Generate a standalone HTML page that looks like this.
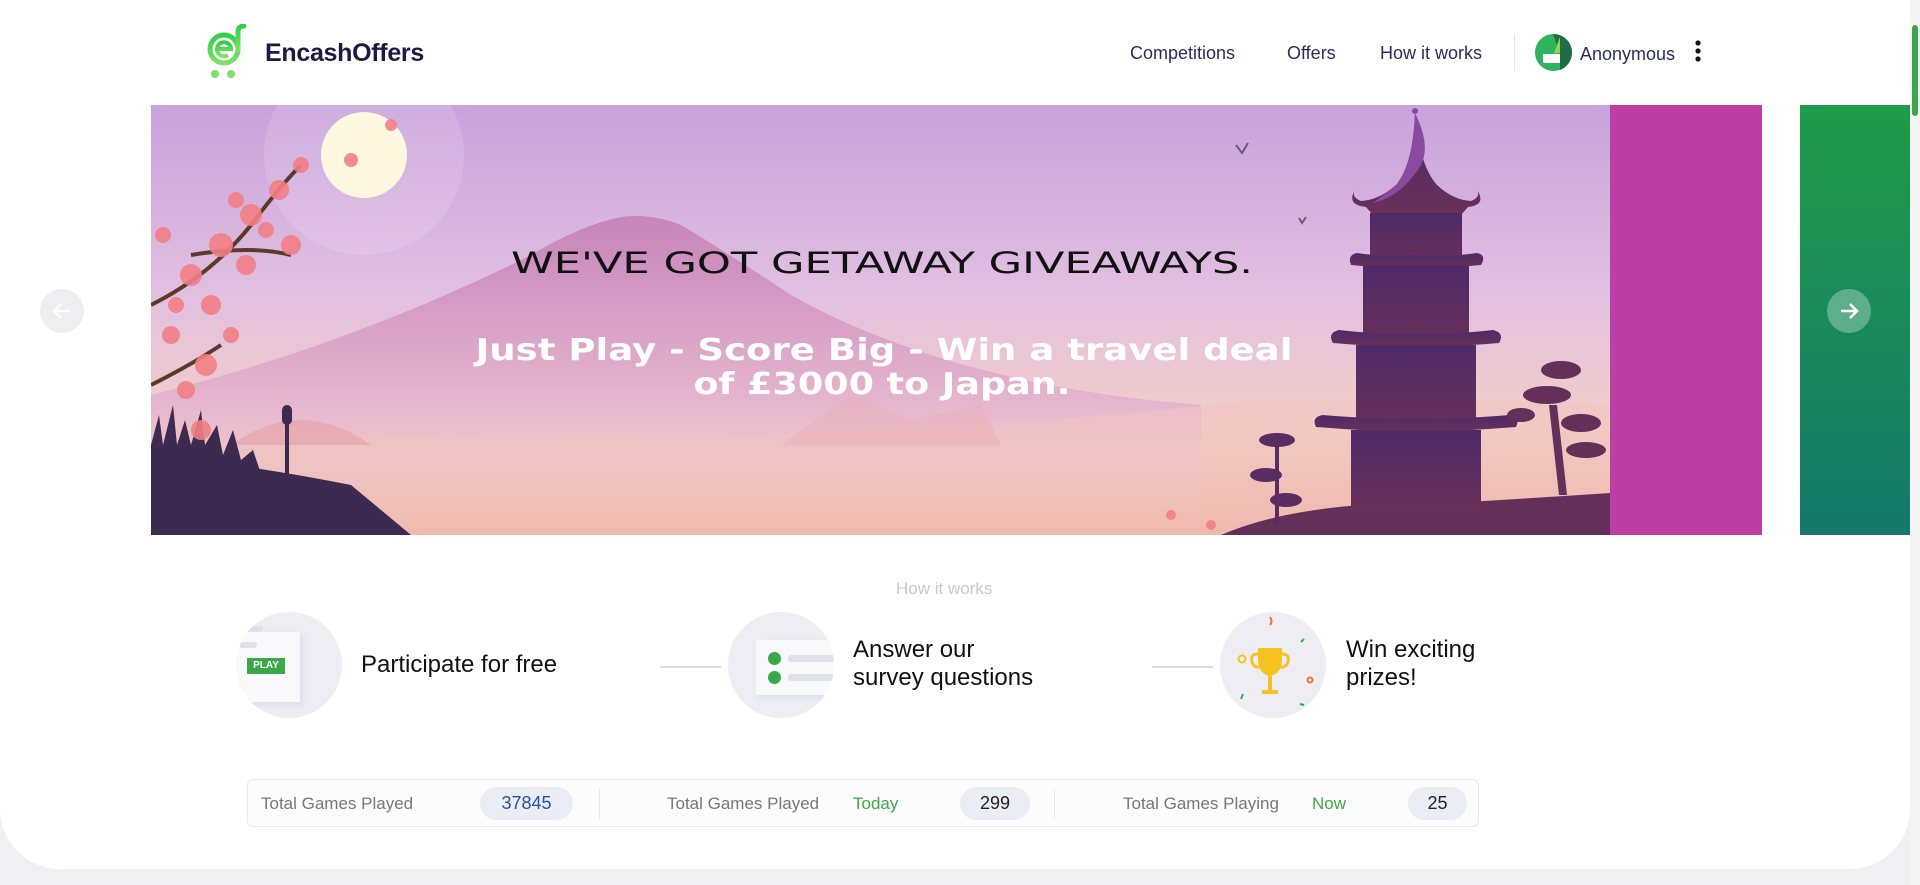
<!DOCTYPE html>
<html><head><meta charset="utf-8"><style>
*{margin:0;padding:0;box-sizing:border-box}
html,body{width:1920px;height:885px;overflow:hidden;background:#f0f0f4;font-family:"Liberation Sans",sans-serif}
.card{position:absolute;left:0;top:0;width:1910px;height:869px;background:#fff;border-radius:0 0 60px 60px}
.sb{position:absolute;left:1910px;top:0;width:10px;height:885px;background:#f4f4f4}
.thumb{position:absolute;left:1912px;top:25px;width:6px;height:91px;background:#3aa84a;border-radius:3px}
.nav a{position:absolute;top:43px;font-size:18px;color:#2a2d5a;text-decoration:none}
.t{position:absolute;white-space:nowrap}
.circ{position:absolute;width:106px;height:106px;border-radius:50%;background:#ededf3;overflow:hidden}
.line{position:absolute;height:2px;background:#d8dae6;width:61px;top:666px}
.stats{position:absolute;left:247px;top:779px;width:1232px;height:48px;border:1px solid #e8e8ee;border-radius:6px;background:#fcfcfd}
.st{position:absolute;top:14px;font-size:17px;color:#777}
.pill{position:absolute;top:7px;height:33px;border-radius:17px;background:#ebedf4;font-size:18px;text-align:center;line-height:33px;color:#222}
.dv{position:absolute;top:9px;width:1px;height:30px;background:#e6e6ec}
</style></head><body>
<div class="card"></div>
<div class="sb"></div><div class="thumb"></div>

<svg style="position:absolute;left:206px;top:24px" width="48" height="56" viewBox="0 0 48 56">
<defs><linearGradient id="lg" x1="0" y1="0" x2="0" y2="1"><stop offset="0" stop-color="#2fcf4a"/><stop offset="1" stop-color="#7fe06a"/></linearGradient></defs>
<circle cx="18" cy="25" r="14" fill="none" stroke="url(#lg)" stroke-width="5"/>
<path d="M32 26 V8 Q32 2 38 2" fill="none" stroke="url(#lg)" stroke-width="5" stroke-linecap="round"/>
<path d="M11 25 H25 A7 7 0 1 0 22 31" fill="none" stroke="url(#lg)" stroke-width="4"/>
<circle cx="9" cy="50" r="4" fill="#7fe06a"/><circle cx="25" cy="50" r="4" fill="#7fe06a"/>
</svg>
<div class="t" style="left:265px;top:39px;font-size:25px;font-weight:bold;color:#1a1a45;letter-spacing:-0.3px">EncashOffers</div>

<div class="nav"><a style="left:1130px">Competitions</a><a style="left:1287px">Offers</a><a style="left:1380px">How it works</a></div>
<div style="position:absolute;left:1514px;top:34px;width:1px;height:37px;background:#e4e6ee"></div>
<svg style="position:absolute;left:1535px;top:34px" width="37" height="37" viewBox="0 0 37 37">
<circle cx="18.5" cy="18.5" r="18.5" fill="#2eb35f"/><path d="M18 0 A18.5 18.5 0 0 1 37 18.5 A18.5 18.5 0 0 1 25 36 V20 Z" fill="#1f6e48"/><path d="M25 3 V19 H19 Z" fill="#9ad14b"/><rect x="8" y="20" width="17" height="9" fill="#fff"/></svg>
<div class="t" style="left:1580px;top:44px;font-size:18px;color:#2a2d5a">Anonymous</div>
<svg style="position:absolute;left:1694px;top:40px" width="8" height="22"><circle cx="4" cy="3" r="2.6" fill="#111"/><circle cx="4" cy="11" r="2.6" fill="#111"/><circle cx="4" cy="19" r="2.6" fill="#111"/></svg>

<svg style="position:absolute;left:151px;top:105px" width="1611" height="430" viewBox="0 0 1611 430">
<defs>
<linearGradient id="sky" x1="0" y1="0" x2="0" y2="1"><stop offset="0" stop-color="#c8a2dc"/><stop offset=".45" stop-color="#e2c0e0"/><stop offset=".75" stop-color="#f3cfc8"/><stop offset="1" stop-color="#eeae9e"/></linearGradient>
<linearGradient id="mt" x1="0" y1="0" x2="0" y2="1"><stop offset="0" stop-color="#c47cb2"/><stop offset=".6" stop-color="#e4b2cf"/><stop offset="1" stop-color="#f3cfc8" stop-opacity="0"/></linearGradient>
<linearGradient id="pg" x1="0" y1="0" x2="0" y2="1"><stop offset="0" stop-color="#4e2a6a"/><stop offset="1" stop-color="#6a3058"/></linearGradient>
</defs>
<rect width="1459" height="430" fill="url(#sky)"/>
<rect x="1459" width="152" height="430" fill="#bd3fa5"/>
<circle cx="213" cy="50" r="100" fill="#fff" opacity=".13"/>
<circle cx="213" cy="50" r="43" fill="#fff8e0"/>
<path d="M0 290 Q200 240 380 150 Q430 120 470 112 Q500 108 530 120 Q580 150 640 190 Q800 280 1050 300 L1050 430 L0 430Z" fill="url(#mt)" opacity=".85"/>
<path d="M0 340 Q300 325 600 330 Q900 320 1100 295 Q1300 290 1459 300 L1459 430 L0 430Z" fill="#f2c4c0" opacity=".5"/>
<path d="M80 340 Q150 290 220 340Z" fill="#e6a4ad" opacity=".7"/>
<path d="M630 340 L700 290 L760 315 L830 300 L850 340Z" fill="#e7b0b8" opacity=".5"/>
<path d="M0 350 Q100 360 200 380 L260 430 L0 430Z" fill="#3d2a50"/>
<path d="M0 340 l8 -30 l4 30 l10 -40 l4 40 l8 -25 l6 25 l10 -35 l4 35 l12 -20 l6 30 l10 -25 l8 30 l12 -10 l20 60 L0 430Z" fill="#3d2a50"/>
<rect x="134" y="310" width="4" height="60" fill="#3d2a50"/><rect x="131" y="300" width="10" height="20" rx="5" fill="#3d2a50"/>
<path d="M1070 430 Q1150 395 1300 398 Q1400 392 1459 388 L1459 430Z" fill="#64305a"/>
<!-- pagoda -->
<g fill="url(#pg)">
<path d="M1264 8 Q1262 60 1245 80 Q1228 95 1210 96 Q1200 92 1204 85 Q1195 100 1215 102 L1222 110 L1310 110 L1317 102 Q1336 100 1326 85 Q1330 92 1320 96 Q1302 95 1286 80 Q1268 60 1264 8Z"/>
<rect x="1219" y="108" width="92" height="52"/>
<path d="M1200 160 Q1196 150 1206 148 Q1230 152 1264 150 Q1300 152 1326 148 Q1336 150 1330 160 Q1300 163 1264 163 Q1230 163 1200 160Z"/>
<rect x="1212" y="160" width="106" height="78"/>
<path d="M1182 238 Q1176 228 1188 225 Q1230 230 1264 228 Q1300 230 1342 225 Q1354 228 1348 238 Q1300 242 1264 242 Q1230 242 1182 238Z"/>
<rect x="1205" y="240" width="120" height="82"/>
<path d="M1165 322 Q1160 312 1172 310 Q1230 315 1264 313 Q1300 315 1358 310 Q1370 312 1365 322 Q1300 327 1264 327 Q1230 327 1165 322Z"/>
<rect x="1200" y="325" width="130" height="80"/>
</g>
<path d="M1264 8 Q1262 60 1245 80 Q1230 92 1222 98 Q1250 92 1270 60 Q1280 40 1264 8Z" fill="#8a4aa0"/>
<circle cx="1264" cy="6" r="3" fill="#8a4aa0"/>
<path d="M1398 300 L1408 390 L1416 390 L1406 300Z" fill="#64305a"/>
<ellipse cx="1396" cy="290" rx="24" ry="9" fill="#64305a"/><ellipse cx="1410" cy="265" rx="20" ry="9" fill="#64305a"/><ellipse cx="1430" cy="318" rx="20" ry="9" fill="#64305a"/><ellipse cx="1435" cy="345" rx="20" ry="8" fill="#64305a"/><ellipse cx="1370" cy="310" rx="14" ry="7" fill="#64305a"/>
<rect x="1124" y="340" width="4" height="80" fill="#5a2d62"/>
<ellipse cx="1126" cy="335" rx="18" ry="7" fill="#5a2d62"/><ellipse cx="1115" cy="370" rx="16" ry="7" fill="#5a2d62"/><ellipse cx="1135" cy="395" rx="16" ry="7" fill="#5a2d62"/>
<path d="M1085 40 l6 8 l6 -10 M1148 113 l3 5 l4 -6" stroke="#6b5a7a" stroke-width="2" fill="none"/>
<path d="M0 200 Q60 170 100 120 Q130 80 150 60 M40 150 Q100 140 140 150 M0 280 Q40 260 70 240" stroke="#5b3a28" stroke-width="4" fill="none"/>
<g fill="#f27f86" opacity=".9">
<circle cx="100" cy="110" r="11"/><circle cx="128" cy="85" r="10"/><circle cx="150" cy="60" r="8"/><circle cx="70" cy="140" r="12"/><circle cx="40" cy="170" r="11"/><circle cx="95" cy="160" r="10"/><circle cx="140" cy="140" r="10"/><circle cx="60" cy="200" r="10"/><circle cx="20" cy="230" r="9"/><circle cx="55" cy="260" r="11"/><circle cx="35" cy="285" r="9"/><circle cx="200" cy="55" r="7"/><circle cx="240" cy="20" r="6"/><circle cx="12" cy="130" r="8"/><circle cx="50" cy="325" r="10"/><circle cx="1020" cy="410" r="5"/><circle cx="1060" cy="420" r="5"/>
<circle cx="115" cy="125" r="8"/><circle cx="85" cy="95" r="8"/><circle cx="25" cy="200" r="8"/><circle cx="80" cy="230" r="8"/>
</g>
<text x="731" y="168" text-anchor="middle" textLength="742" lengthAdjust="spacingAndGlyphs" font-family="DejaVu Sans,sans-serif" font-size="29" fill="#111">WE'VE GOT GETAWAY GIVEAWAYS.</text>
<text x="733" y="255" text-anchor="middle" textLength="817" lengthAdjust="spacingAndGlyphs" font-family="DejaVu Sans,sans-serif" font-weight="bold" font-size="30" fill="#fff">Just Play - Score Big - Win a travel deal</text>
<text x="731" y="289" text-anchor="middle" textLength="377" lengthAdjust="spacingAndGlyphs" font-family="DejaVu Sans,sans-serif" font-weight="bold" font-size="30" fill="#fff">of £3000 to Japan.</text>
</svg>
<div style="position:absolute;left:1800px;top:105px;width:110px;height:430px;background:linear-gradient(#1f9c4b,#14786a)"></div>
<svg style="position:absolute;left:40px;top:289px" width="44" height="44"><circle cx="22" cy="22" r="22" fill="#eeeef2"/><path d="M30 22 H14 M21 15 L14 22 L21 29" stroke="#fff" stroke-width="2.5" fill="none"/></svg>
<svg style="position:absolute;left:1827px;top:289px" width="44" height="44"><circle cx="22" cy="22" r="22" fill="#ffffff" fill-opacity=".3"/><path d="M14 22 H30 M23 15 L30 22 L23 29" stroke="#fff" stroke-width="2.5" fill="none"/></svg>

<div class="t" style="left:896px;top:579px;font-size:17px;color:#c8c8cc">How it works</div>
<div class="circ" style="left:236px;top:612px"><div style="position:absolute;left:0;top:20px;width:64px;height:70px;background:#f9f9fc;box-shadow:3px 3px 6px #dde"></div><div style="position:absolute;left:5px;top:14px;width:22px;height:6px;background:#dfe0ea;border-radius:3px"></div><div style="position:absolute;left:3px;top:30px;width:18px;height:6px;background:#dfe0ea;border-radius:3px"></div><div style="position:absolute;left:11px;top:46px;width:38px;height:16px;background:#3aa84a;color:#fff;font-size:10px;line-height:16px;text-align:center;font-weight:bold">PLAY</div></div>
<div class="t" style="left:361px;top:651px;font-size:24px;color:#111">Participate for free</div>
<div class="line" style="left:660px"></div>
<div class="circ" style="left:728px;top:612px"><div style="position:absolute;left:28px;top:28px;width:90px;height:55px;background:#f9f9fc;box-shadow:3px 3px 6px #dde"></div><div style="position:absolute;left:40px;top:40px;width:13px;height:13px;border-radius:50%;background:#3aa84a"></div><div style="position:absolute;left:40px;top:59px;width:13px;height:13px;border-radius:50%;background:#3aa84a"></div><div style="position:absolute;left:60px;top:43px;width:50px;height:7px;background:#dfe0ea;border-radius:3px"></div><div style="position:absolute;left:60px;top:62px;width:50px;height:7px;background:#dfe0ea;border-radius:3px"></div></div>
<div class="t" style="left:853px;top:636px;font-size:24px;color:#111;line-height:28px">Answer our<br>survey questions</div>
<div class="line" style="left:1152px"></div>
<div class="circ" style="left:1220px;top:612px"><svg width="106" height="106"><path d="M38 36 H62 V46 Q62 62 50 64 Q38 62 38 46Z M48 64 H52 V78 H48Z M42 78 H58 V82 H42Z" fill="#f6c21f"/><path d="M38 42 Q30 42 32 50 Q34 56 40 55 M62 42 Q70 42 68 50 Q66 56 60 55" stroke="#f6c21f" stroke-width="3" fill="none"/><circle cx="22" cy="47" r="3.5" stroke="#f6c21f" stroke-width="2" fill="none"/><circle cx="90" cy="68" r="2.5" stroke="#f07040" stroke-width="2" fill="none"/><path d="M50 5 q3 4 0 8" stroke="#f07040" stroke-width="2" fill="none"/><path d="M84 27 l-3 3 M23 82 l-2 5 M80 92 l4 1" stroke="#3aa84a" stroke-width="2"/></svg></div>
<div class="t" style="left:1346px;top:636px;font-size:24px;color:#111;line-height:28px">Win exciting<br>prizes!</div>

<div class="stats">
<div class="st" style="left:13px">Total Games Played</div>
<div class="pill" style="left:232px;width:93px;color:#2c4fa0">37845</div>
<div class="dv" style="left:351px"></div>
<div class="st" style="left:419px">Total Games Played</div>
<div class="st" style="left:605px;color:#3aa84a">Today</div>
<div class="pill" style="left:712px;width:70px">299</div>
<div class="dv" style="left:806px"></div>
<div class="st" style="left:875px">Total Games Playing</div>
<div class="st" style="left:1064px;color:#3aa84a">Now</div>
<div class="pill" style="left:1160px;width:59px">25</div>
</div>
</body></html>
